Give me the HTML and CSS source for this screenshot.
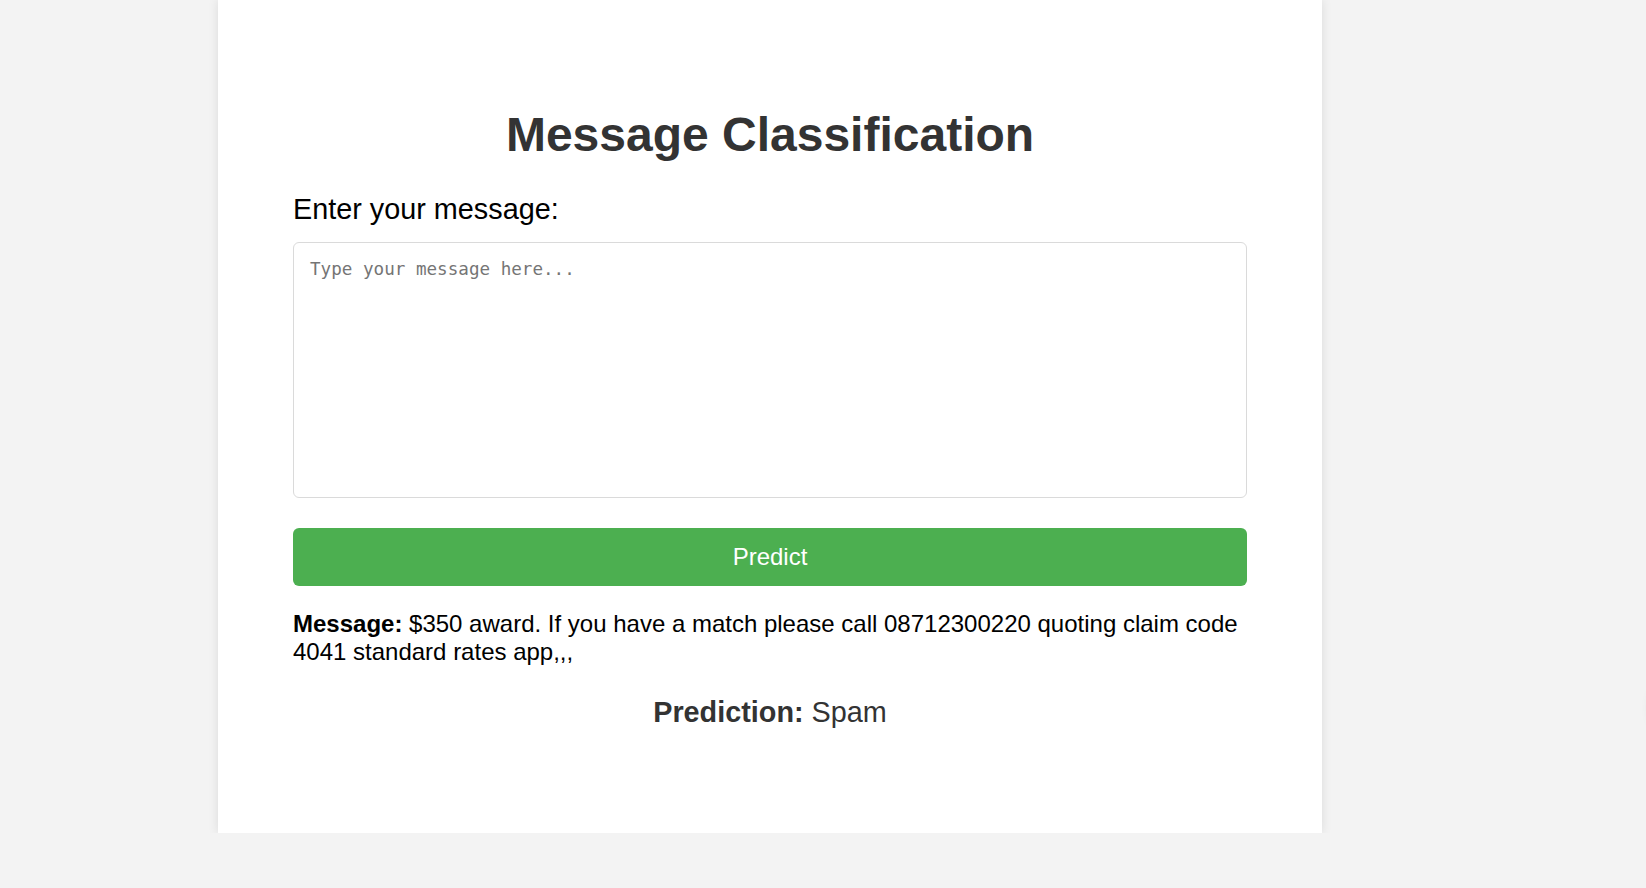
FILE: index.html
```html
<!DOCTYPE html>
<html lang="en">
<head>
<meta charset="utf-8">
<title>Message Classification</title>
<link rel="stylesheet" href="styles.css">
</head>
<body>
<main class="card">
  <h1 class="title">Message Classification</h1>
  <form class="form">
    <label class="label" for="msg">Enter your message:</label>
    <textarea class="input" id="msg" placeholder="Type your message here..."></textarea>
    <button class="btn" type="button">Predict</button>
  </form>
  <p class="message"><strong>Message:</strong> $350 award. If you have a match please call 08712300220 quoting claim code 4041 standard rates app,,,</p>
  <p class="prediction"><strong>Prediction:</strong> Spam</p>
</main>
<div class="float-edge"></div>
</body>
</html>
```
FILE: styles.css
```css
html, body {
  margin: 0;
  padding: 0;
}
body {
  background: #f3f3f3;
  font-family: "Liberation Sans", Arial, sans-serif;
  overflow: hidden;
}
.card {
  box-sizing: border-box;
  width: 1104px;
  margin-left: 218px;
  padding: 107px 75px 104px;
  background: #fff;
  box-shadow: 0 0 10px rgba(0, 0, 0, 0.1);
}
.title {
  margin: 0;
  font-size: 48px;
  line-height: 55px;
  font-weight: bold;
  color: #333;
  text-align: center;
}
.form {
  display: flex;
  flex-direction: column;
  margin-top: 31px;
}
.label {
  font-size: 28.8px;
  line-height: 33px;
  color: #000;
}
.input {
  box-sizing: border-box;
  margin-top: 16px;
  width: 100%;
  height: 256px;
  padding: 16px;
  border: 1px solid #dadada;
  border-radius: 6px;
  font-family: "DejaVu Sans Mono", "Liberation Mono", monospace;
  font-size: 17.6px;
  resize: none;
  outline: none;
}
.input::placeholder {
  color: #757575;
}
.btn {
  margin-top: 30px;
  height: 58px;
  border: none;
  border-radius: 6px;
  background: #4caf50;
  color: #fff;
  font-family: "Liberation Sans", Arial, sans-serif;
  font-size: 24px;
  cursor: pointer;
}
.message {
  margin: 24px 0 0;
  font-size: 24px;
  line-height: 28.3px;
  color: #000;
}
.prediction {
  margin: 29px 0 0;
  font-size: 28.8px;
  line-height: 33px;
  color: #333;
  text-align: center;
}
.float-edge {
  position: fixed;
  left: 1652px;
  top: 680px;
  width: 56px;
  height: 56px;
  border-radius: 50%;
  background: #fff;
  box-shadow: 0 0 12px rgba(0, 0, 0, 0.15);
}
```
